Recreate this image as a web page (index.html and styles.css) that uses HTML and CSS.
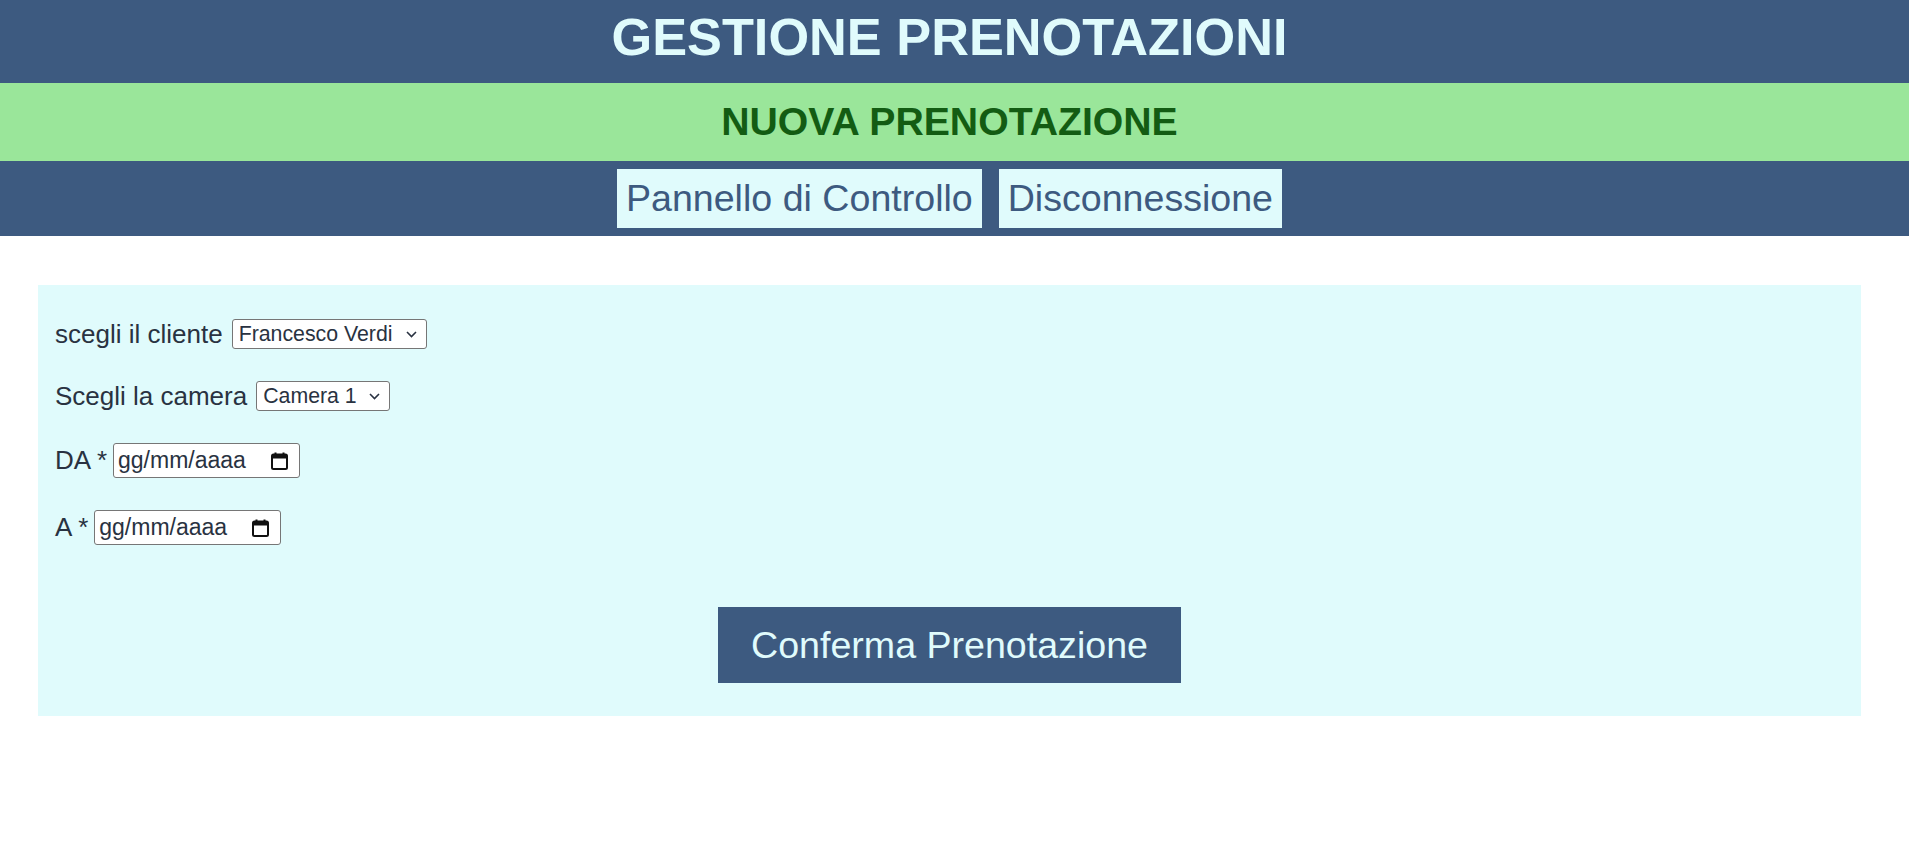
FILE: index.html
```html
<!DOCTYPE html>
<html lang="it">
<head>
<meta charset="utf-8">
<title>Gestione Prenotazioni</title>
<link rel="stylesheet" href="styles.css">
</head>
<body>
<header class="top">
  <h1 class="title">GESTIONE PRENOTAZIONI</h1>
</header>
<div class="sub">
  <h2 class="subtitle">NUOVA PRENOTAZIONE</h2>
</div>
<nav class="nav">
  <a class="nav-link" href="#">Pannello di Controllo</a>
  <a class="nav-link" href="#">Disconnessione</a>
</nav>
<main class="main">
  <form class="card">
    <div class="field">
      <label class="label" for="cliente">scegli il cliente</label>
      <select class="select select-wide" id="cliente">
        <option>Francesco Verdi</option>
      </select>
    </div>
    <div class="field">
      <label class="label" for="camera">Scegli la camera</label>
      <select class="select select-narrow" id="camera">
        <option>Camera 1</option>
      </select>
    </div>
    <div class="field field-date">
      <label class="label" for="da">DA *</label>
      <span class="date">
        <input class="date-input" id="da" type="text" placeholder="gg/mm/aaaa">
        <svg class="cal" width="17" height="18" viewBox="0 0 17 18"><path d="M4.5 0.5v3M12.5 0.5v3" stroke="#111" stroke-width="2" fill="none"/><rect x="1" y="2.5" width="15" height="14.5" rx="1.5" fill="none" stroke="#111" stroke-width="2"/><rect x="1" y="2.5" width="15" height="4" fill="#111"/></svg>
      </span>
    </div>
    <div class="field field-date">
      <label class="label" for="a">A *</label>
      <span class="date">
        <input class="date-input" id="a" type="text" placeholder="gg/mm/aaaa">
        <svg class="cal" width="17" height="18" viewBox="0 0 17 18"><path d="M4.5 0.5v3M12.5 0.5v3" stroke="#111" stroke-width="2" fill="none"/><rect x="1" y="2.5" width="15" height="14.5" rx="1.5" fill="none" stroke="#111" stroke-width="2"/><rect x="1" y="2.5" width="15" height="4" fill="#111"/></svg>
      </span>
    </div>
    <div class="actions">
      <button class="submit" type="button">Conferma Prenotazione</button>
    </div>
  </form>
</main>
</body>
</html>
```

FILE: styles.css
```css
* { box-sizing: border-box; }

body {
  margin: 0;
  font-family: "Liberation Sans", Arial, sans-serif;
  background: #ffffff;
  color: #293241;
}

.top {
  background: #3d5a80;
  height: 83px;
  padding: 7px 10px 0 0;
}

.title {
  margin: 0;
  text-align: center;
  font-size: 52.3px;
  line-height: 60px;
  font-weight: bold;
  color: #e0fbfc;
}

.sub {
  background: #9ae69a;
  height: 78px;
  padding-right: 10px;
}

.subtitle {
  margin: 0;
  text-align: center;
  font-size: 39.2px;
  line-height: 78px;
  font-weight: bold;
  color: #135c13;
}

.nav {
  background: #3d5a80;
  height: 75px;
  padding: 8px 10px 0 0;
  display: flex;
  justify-content: center;
  gap: 17px;
}

.nav-link {
  display: block;
  height: 59px;
  line-height: 59px;
  padding: 0 9px;
  background: #e0fbfc;
  color: #3d5a80;
  font-size: 37.6px;
  text-decoration: none;
}

.main {
  padding: 49px 48px 0 38px;
}

.card {
  background: #e0fbfc;
  height: 431px;
  padding: 34px 17px 0 17px;
  display: flex;
  flex-direction: column;
  gap: 32px;
}

.field {
  display: flex;
  align-items: center;
  gap: 9px;
  height: 30px;
}

.field-date {
  gap: 6px;
  height: 35px;
}

.label {
  font-size: 26px;
  color: #293241;
}

.select {
  appearance: none;
  -webkit-appearance: none;
  height: 30px;
  font-family: "Liberation Sans", Arial, sans-serif;
  font-size: 21.3px;
  color: #293241;
  background-color: #ffffff;
  background-image: url("data:image/svg+xml,%3Csvg xmlns='http://www.w3.org/2000/svg' width='11' height='7' viewBox='0 0 11 7'%3E%3Cpath d='M1 1l4.5 4.5L10 1' fill='none' stroke='%23293241' stroke-width='1.6'/%3E%3C/svg%3E");
  background-repeat: no-repeat;
  background-position: right 9px center;
  border: 1px solid #767676;
  border-radius: 3px;
  padding: 0 0 0 6px;
}

.select-wide { width: 195px; }
.select-narrow { width: 134px; }

.date {
  display: flex;
  align-items: center;
  width: 187px;
  height: 35px;
  background: #ffffff;
  border: 1px solid #767676;
  border-radius: 3px;
  padding: 0 11px 0 4px;
}

.date-input {
  flex: 1;
  min-width: 0;
  border: 0;
  outline: 0;
  padding: 0;
  background: transparent;
  font-family: "Liberation Sans", Arial, sans-serif;
  font-size: 23px;
  color: #293241;
}

.date-input::placeholder {
  color: #293241;
  opacity: 1;
}

.cal { flex: none; }

.actions {
  display: flex;
  justify-content: center;
  margin-top: 30px;
}

.submit {
  height: 76px;
  padding: 0 33px;
  border: 0;
  background: #3d5a80;
  color: #e0fbfc;
  font-family: "Liberation Sans", Arial, sans-serif;
  font-size: 37.6px;
}
```
